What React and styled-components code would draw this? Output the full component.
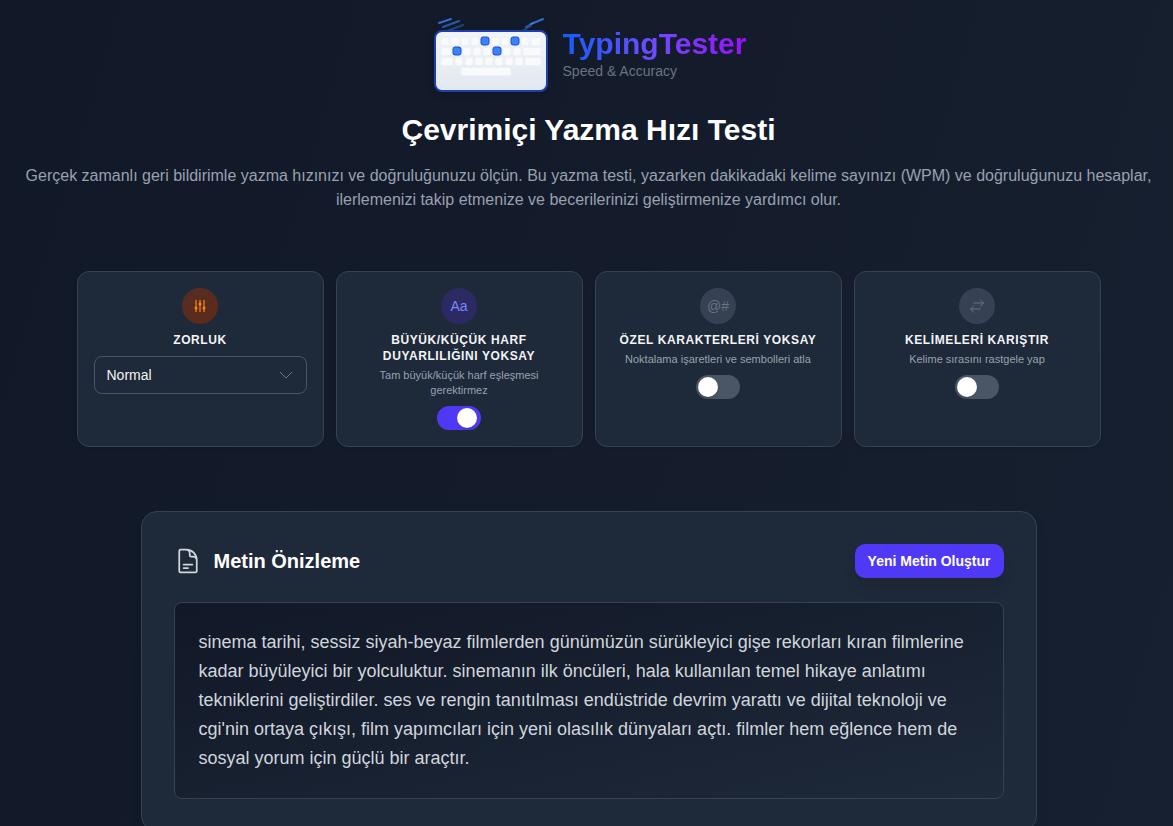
import React, { useState } from 'react';
import styled, { createGlobalStyle } from 'styled-components';

const OPTIONS = [
    {
        id: 'case',
        symbol: 'Aa',
        title: 'BÜYÜK/KÜÇÜK HARF DUYARLILIĞINI YOKSAY',
        text: 'Tam büyük/küçük harf eşleşmesi gerektirmez',
    },
    {
        id: 'special',
        symbol: '@#',
        title: 'ÖZEL KARAKTERLERİ YOKSAY',
        text: 'Noktalama işaretleri ve sembolleri atla',
    },
    {
        id: 'shuffle',
        title: 'KELİMELERİ KARIŞTIR',
        text: 'Kelime sırasını rastgele yap',
    },
];

const SAMPLE =
    "sinema tarihi, sessiz siyah-beyaz filmlerden günümüzün sürükleyici gişe rekorları kıran filmlerine kadar büyüleyici bir yolculuktur. sinemanın ilk öncüleri, hala kullanılan temel hikaye anlatımı tekniklerini geliştirdiler. ses ve rengin tanıtılması endüstride devrim yarattı ve dijital teknoloji ve cgi'nin ortaya çıkışı, film yapımcıları için yeni olasılık dünyaları açtı. filmler hem eğlence hem de sosyal yorum için güçlü bir araçtır.";

// [x, y, width] of every key cap
const KEYS = [
    ...[0, 10, 20, 30, 50, 60, 80].map((x) => [16 + x, 23, 8]),
    [106, 23, 10],
    [16, 33, 10],
    ...[38, 48, 58, 78, 88].map((x) => [x, 33, 8]),
    [98, 33, 18],
    [16, 43, 12],
    ...[30, 40, 50, 60, 70, 80, 90].map((x) => [x, 43, 8]),
    [100, 43, 16],
    [36, 53, 50],
];

const PRESSED = [[56, 23], [86, 23], [28, 33], [68, 33]];

const KeyboardLogo = () => (
    <LogoSvg viewBox="0 -1 130 80" aria-hidden="true">
        <defs>
            <linearGradient id="board" x1="0" y1="0" x2="0" y2="1">
                <stop offset="0" stopColor="#f1f5f9" />
                <stop offset="1" stopColor="#e2e8f0" />
            </linearGradient>
        </defs>
        <g stroke="#3b82f6" strokeWidth="2" strokeLinecap="round">
            <path d="M14 8l12-4M118 4l-12 5" opacity="0.8" />
            <path d="M18 12l16-6M108 8l-7 4" opacity="0.6" />
            <path d="M22 16l16-6M106 11l-9 5" opacity="0.4" />
        </g>
        <rect x="10" y="16" width="112" height="60" rx="7" fill="url(#board)" stroke="#1e40af" strokeWidth="2" />
        {KEYS.map(([x, y, w]) => (
            <rect key={`${x}-${y}`} x={x} y={y - 0.5} width={w} height="8" rx="1.5" fill="#f8fafc" stroke="#edf1f6" />
        ))}
        {PRESSED.map(([x, y]) => (
            <rect key={`${x}-${y}`} x={x} y={y - 1} width="8" height="8" rx="2" fill="#3b82f6" stroke="#1d4ed8" />
        ))}
    </LogoSvg>
);

const SlidersIcon = () => (
    <svg width="12" height="14" viewBox="0 0 12 14" aria-hidden="true">
        <path d="M2 1v12M6 1v12M10 1v12" stroke="#b8620f" strokeWidth="2" />
        <g fill="#ff8904">
            <circle cx="2" cy="9" r="1.5" />
            <circle cx="6" cy="5" r="1.5" />
            <circle cx="10" cy="9" r="1.5" />
        </g>
    </svg>
);

const SwapIcon = () => (
    <svg width="14" height="14" viewBox="0 0 14 14" fill="none" stroke="currentColor" aria-hidden="true">
        <path d="M3.5 4h10M10 0.5l3.5 3.5-3.5 3.5M10.5 10h-10M4 6.5l-3.5 3.5 3.5 3.5" />
    </svg>
);

const DocumentIcon = () => (
    <svg width="28" height="28" viewBox="0 0 24 24" fill="none" stroke="#d1d5dc" strokeWidth="1.5" strokeLinecap="round" strokeLinejoin="round" aria-hidden="true">
        <path d="M19.5 14.25v-2.625a3.375 3.375 0 0 0-3.375-3.375h-1.5A1.125 1.125 0 0 1 13.5 7.125v-1.5a3.375 3.375 0 0 0-3.375-3.375H8.25m0 12.75h7.5m-7.5 3H12M10.5 2.25H5.625c-.621 0-1.125.504-1.125 1.125v17.25c0 .621.504 1.125 1.125 1.125h12.75c.621 0 1.125-.504 1.125-1.125V11.25a9 9 0 0 0-9-9Z" />
    </svg>
);

const App = () => {
    const [level, setLevel] = useState('normal');
    const [enabled, setEnabled] = useState({ case: true, special: false, shuffle: false });

    const toggle = (id) => setEnabled((prev) => ({ ...prev, [id]: !prev[id] }));

    return (
        <Page>
            <GlobalStyle />
            <Header>
                <Brand>
                    <KeyboardLogo />
                    <div>
                        <BrandName>TypingTester</BrandName>
                        <Tagline>Speed &amp; Accuracy</Tagline>
                    </div>
                </Brand>
                <Heading>Çevrimiçi Yazma Hızı Testi</Heading>
                <Intro>
                    Gerçek zamanlı geri bildirimle yazma hızınızı ve doğruluğunuzu ölçün. Bu yazma testi, yazarken
                    dakikadaki kelime sayınızı (WPM) ve doğruluğunuzu hesaplar, ilerlemenizi takip etmenize ve
                    becerilerinizi geliştirmenize yardımcı olur.
                </Intro>
            </Header>

            <Options>
                <Card>
                    <Badge $tone="orange">
                        <SlidersIcon />
                    </Badge>
                    <CardTitle htmlFor="level">ZORLUK</CardTitle>
                    <SelectBox>
                        <Select id="level" value={level} onChange={(e) => setLevel(e.target.value)}>
                            <option value="easy">Kolay</option>
                            <option value="normal">Normal</option>
                            <option value="hard">Zor</option>
                        </Select>
                        <Chevron viewBox="0 0 14 14" aria-hidden="true">
                            <path d="M1 4l6 6 6-6" />
                        </Chevron>
                    </SelectBox>
                </Card>
                {OPTIONS.map(({ id, symbol, title, text }) => (
                    <Card key={id}>
                        <Badge $tone={enabled[id] ? 'indigo' : 'gray'}>{symbol || <SwapIcon />}</Badge>
                        <CardTitle htmlFor={id}>{title}</CardTitle>
                        <CardText>{text}</CardText>
                        <Switch type="checkbox" role="switch" id={id} checked={enabled[id]} onChange={() => toggle(id)} />
                    </Card>
                ))}
            </Options>

            <Preview>
                <PreviewHeader>
                    <PreviewTitle>
                        <DocumentIcon />
                        Metin Önizleme
                    </PreviewTitle>
                    <NewTextButton type="button">Yeni Metin Oluştur</NewTextButton>
                </PreviewHeader>
                <Sample>{SAMPLE}</Sample>
            </Preview>
        </Page>
    );
};

const GlobalStyle = createGlobalStyle`
    * {
        box-sizing: border-box;
        margin: 0;
    }

    body {
        background: #111827;
        font-family: 'Liberation Sans', Arial, sans-serif;
        color: #fff;
        overflow: hidden;
    }

    button, select {
        font-family: inherit;
    }
`;

const Page = styled.main`
    display: flex;
    flex-direction: column;
    align-items: center;
    min-height: 100vh;
    padding: 14px 16px 32px 20px;
    background: linear-gradient(106deg, #111827, #172030);
`;

const Header = styled.header`
    display: flex;
    flex-direction: column;
    align-items: center;
    text-align: center;
`;

const Brand = styled.div`
    display: flex;
    align-items: center;
    gap: 8px;
    padding-right: 6px;
    text-align: left;
`;

const LogoSvg = styled.svg`
    width: 130px;
    height: 80px;
    filter: drop-shadow(0 2px 3px rgba(0, 0, 0, 0.2));
`;

const BrandName = styled.div`
    font-size: 30px;
    font-weight: 700;
    line-height: 34px;
    color: transparent;
    background: linear-gradient(to right, #155dfc, #6f4bff 50%, #9810fa);
    background-clip: text;
`;

const Tagline = styled.div`
    font-size: 14px;
    line-height: 20px;
    color: #6a7282;
`;

const Heading = styled.h1`
    margin-top: 18px;
    font-size: 30px;
    line-height: 36px;
`;

const Intro = styled.p`
    margin-top: 16px;
    font-size: 16px;
    line-height: 24px;
    color: #99a1af;
`;

const Options = styled.section`
    display: grid;
    grid-template-columns: repeat(4, 1fr);
    gap: 12px;
    width: 100%;
    max-width: 1024px;
    margin-top: 59px;
`;

const Card = styled.div`
    display: flex;
    flex-direction: column;
    align-items: center;
    padding: 16px;
    background: #1e2939;
    border: 1px solid #364153;
    border-radius: 12px;
    box-shadow: 0 1px 3px rgba(0, 0, 0, 0.1);
    text-align: center;
`;

const TONES = {
    orange: { background: 'linear-gradient(to bottom right, #542d25, #5f2a18)', color: '#f58a07' },
    indigo: { background: '#2b2a63', color: '#7c86ff' },
    gray: { background: '#364153', color: '#6a7282' },
};

const Badge = styled.div`
    display: flex;
    align-items: center;
    justify-content: center;
    width: 36px;
    height: 36px;
    border-radius: 50%;
    background: ${({ $tone }) => TONES[$tone].background};
    color: ${({ $tone }) => TONES[$tone].color};
    font-size: 14px;
`;

const CardTitle = styled.label`
    margin-top: 8px;
    font-size: 12px;
    font-weight: 700;
    line-height: 16px;
    letter-spacing: 0.6px;
    color: #f3f4f6;
`;

const CardText = styled.p`
    margin-top: 4px;
    font-size: 11px;
    line-height: 15px;
    color: #99a1af;
`;

const SelectBox = styled.div`
    display: grid;
    align-items: center;
    width: 100%;
    margin-top: 8px;
`;

const Select = styled.select`
    grid-area: 1 / 1;
    appearance: none;
    width: 100%;
    height: 38px;
    padding: 0 12px;
    background: #1e2939;
    border: 1px solid #4a5565;
    border-radius: 8px;
    color: #f3f4f6;
    font-size: 14px;
`;

const Chevron = styled.svg`
    grid-area: 1 / 1;
    justify-self: end;
    width: 14px;
    height: 14px;
    margin-right: 14px;
    fill: none;
    stroke: #6a7282;
    pointer-events: none;
`;

const Switch = styled.input`
    appearance: none;
    display: flex;
    align-items: center;
    width: 44px;
    height: 24px;
    margin-top: 8px;
    padding: 2px;
    border-radius: 12px;
    background: #4a5565;
    cursor: pointer;

    &::before {
        content: '';
        width: 20px;
        height: 20px;
        border-radius: 50%;
        background: #fff;
        box-shadow: 0 1px 2px rgba(0, 0, 0, 0.2);
    }

    &:checked {
        justify-content: flex-end;
        padding-right: 4px;
        background: #4f39f6;
    }
`;

const Preview = styled.section`
    width: 100%;
    max-width: 896px;
    margin-top: 64px;
    padding: 32px;
    background: #1e2939;
    border: 1px solid #364153;
    border-radius: 16px;
    box-shadow: 0 10px 15px -3px rgba(0, 0, 0, 0.1);
`;

const PreviewHeader = styled.div`
    display: flex;
    align-items: center;
    justify-content: space-between;
    margin-bottom: 24px;
`;

const PreviewTitle = styled.h2`
    display: flex;
    align-items: center;
    gap: 12px;
    font-size: 20px;
    line-height: 28px;
`;

const NewTextButton = styled.button`
    height: 34px;
    padding: 0 13px;
    background: #4f39f6;
    border: none;
    border-radius: 10px;
    box-shadow: 0 10px 15px -3px rgba(0, 0, 0, 0.1);
    color: #fff;
    font-size: 14px;
    font-weight: 700;
    cursor: pointer;
`;

const Sample = styled.p`
    padding: 25px 24px;
    background: linear-gradient(to bottom right, #111827, #1e2939);
    border: 1px solid #364153;
    border-radius: 8px;
    color: #d1d5dc;
    font-size: 18px;
    line-height: 29px;
`;

export default App;
